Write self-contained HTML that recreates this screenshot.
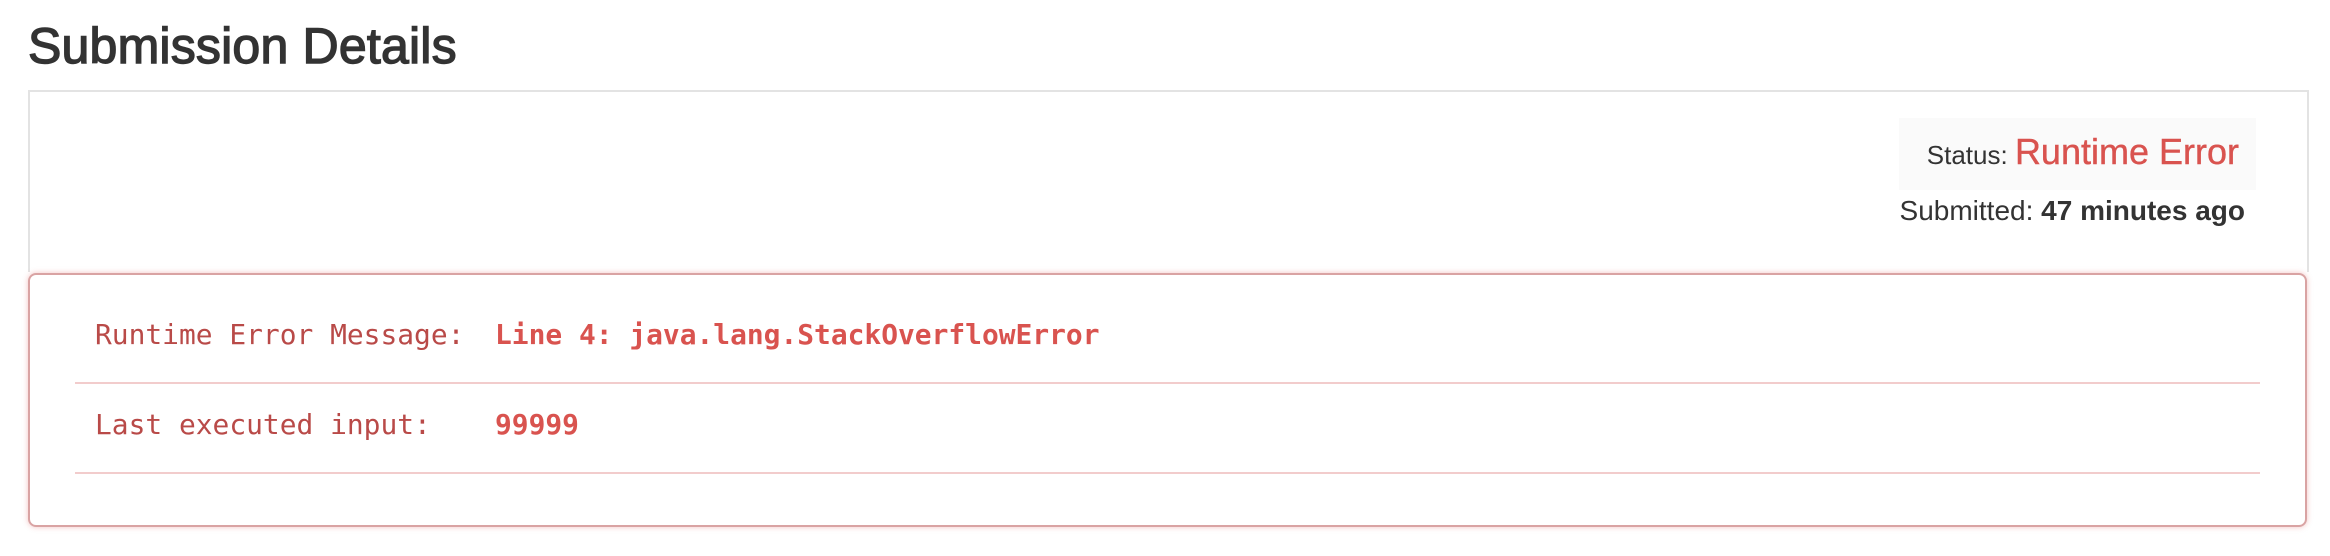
<!DOCTYPE html>
<html><head><meta charset="utf-8"><style>
html,body{margin:0;padding:0;background:#fff;width:2330px;height:556px;overflow:hidden}
body{font-family:"Liberation Sans",sans-serif;color:#333;position:relative}
h1{position:absolute;left:28px;top:16px;margin:0;font-size:50px;font-weight:normal;line-height:60px;color:#333;-webkit-text-stroke:1.4px #333;letter-spacing:0.2px}
.top{position:absolute;left:28px;top:90px;width:2277px;height:180px;border:2px solid #e3e3e3;border-bottom:none}
.status{position:absolute;left:1899px;top:118px;width:357px;height:72px;background:#fafafa}
.st{position:absolute;right:91px;top:131px;white-space:nowrap;font-size:26px;color:#333;line-height:42px}
.st b{font-weight:normal;color:#d9534f;font-size:36px;-webkit-text-stroke:0.4px #d9534f}
.sub{position:absolute;right:85px;top:195px;white-space:nowrap;font-size:28px;line-height:32px}
.err{position:absolute;left:28px;top:273px;width:2275px;height:250px;border:2px solid #d9a3a3;border-radius:8px;box-shadow:0 0 6px rgba(217,83,79,.35)}
.mono{font-family:"DejaVu Sans Mono","Liberation Mono",monospace;font-size:27.9px;position:absolute;white-space:nowrap;line-height:34px}
.lab{color:#b94a48}
.val{color:#d9534f;font-weight:bold}
.line{position:absolute;left:75px;width:2185px;height:2px;background:#f2cccc}
</style></head><body>
<h1>Submission Details</h1>
<div class="top"></div>
<div class="status"></div>
<div class="st">Status: <b>Runtime Error</b></div>
<div class="sub">Submitted: <b>47 minutes ago</b></div>
<div class="err"></div>
<div class="mono lab" style="left:95px;top:318px">Runtime Error Message:</div>
<div class="mono val" style="left:495px;top:318px">Line 4: java.lang.StackOverflowError</div>
<div class="line" style="top:382px"></div>
<div class="mono lab" style="left:95px;top:408px">Last executed input:</div>
<div class="mono val" style="left:495px;top:408px">99999</div>
<div class="line" style="top:472px"></div>
</body></html>
